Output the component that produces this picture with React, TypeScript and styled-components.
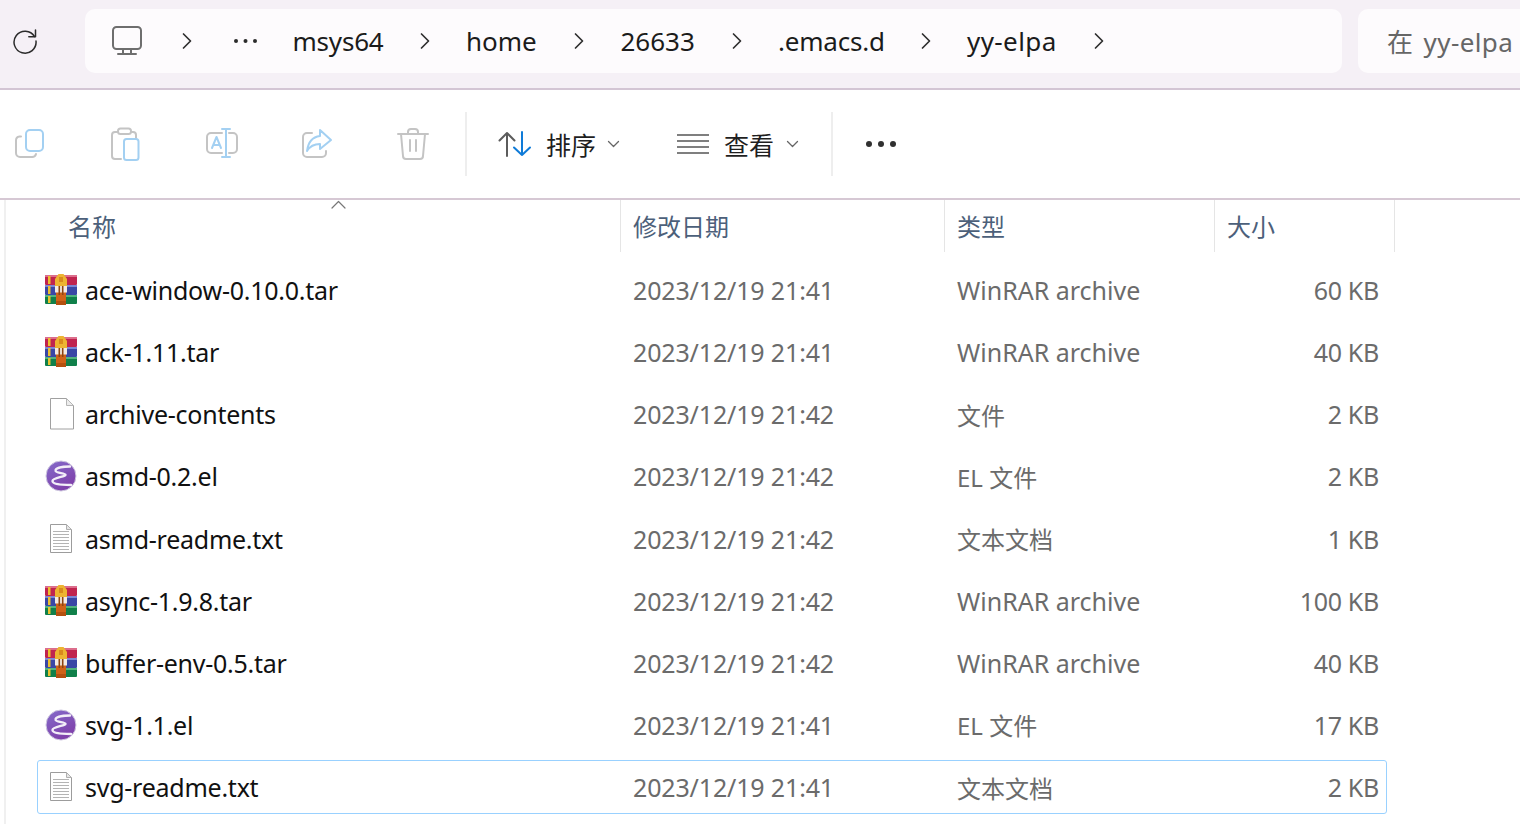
import React from "react";
import styled, { createGlobalStyle } from "styled-components";

const FONT = `"Noto Sans", "Noto Sans CJK SC", sans-serif`;

const Global = createGlobalStyle`
  html, body { margin: 0; padding: 0; background: #fff; overflow: hidden; }
  body { font-family: ${FONT}; width: 1520px; height: 824px; }
`;

const Page = styled.div`
  width: 1520px;
  height: 824px;
  overflow: hidden;
  display: flex;
  flex-direction: column;
`;

const TopBar = styled.div`
  height: 79px;
  flex: none;
  display: flex;
  align-items: flex-start;
  padding-top: 9px;
  background: #f5f0f6;
  border-bottom: 2px solid #d3c5d4;
`;

const RefreshSlot = styled.div`
  width: 85px;
  height: 64px;
  flex: none;
  display: flex;
  align-items: center;
  padding-left: 12px;
  box-sizing: border-box;
`;

const AddressBar = styled.div`
  width: 1257px;
  height: 64px;
  flex: none;
  background: #fdfbfd;
  border-radius: 10px;
  display: flex;
  align-items: center;
  padding-left: 27px;
  box-sizing: border-box;
`;

const Crumb = styled.span<{ $w: number; $ls: number }>`
  font-size: 26px;
  color: #1b1b1b;
  width: ${(p) => p.$w}px;
  letter-spacing: ${(p) => p.$ls}px;
  margin-left: 36.5px;
  flex: none;
  white-space: nowrap;
`;

const Chevron = styled.svg<{ $gap: number }>`
  width: 10px;
  height: 18px;
  flex: none;
  margin-left: ${(p) => p.$gap}px;
`;

const Ellipsis = styled.svg`
  width: 25px;
  height: 6px;
  flex: none;
  margin-left: 41px;
  margin-right: -2px;
`;

const SearchBox = styled.div`
  margin-left: 16px;
  flex: 1;
  height: 64px;
  background: #fdfbfd;
  border-radius: 10px 0 0 10px;
  font-size: 26px;
  color: #666;
  display: flex;
  align-items: center;
  padding-left: 29px;
  white-space: pre;
  overflow: hidden;
  letter-spacing: 0.4px;
  word-spacing: 3px;
`;

const Toolbar = styled.div`
  height: 108px;
  flex: none;
  background: #fff;
  border-bottom: 2px solid #d6c8d4;
  display: flex;
  align-items: center;
`;

const ToolIcon = styled.svg`
  width: 34px;
  height: 34px;
  flex: none;
`;

const ToolGroup = styled.div`
  display: flex;
  align-items: center;
  gap: 61.8px;
  padding-left: 13px;
  width: 465px;
  box-sizing: border-box;
`;

const Divider = styled.div<{ $left?: number }>`
  width: 2px;
  height: 64px;
  background: #eeeeee;
  flex: none;
  margin-left: ${(p) => p.$left ?? 0}px;
`;

const ToolButton = styled.div<{ $left: number; $gap: number }>`
  display: flex;
  align-items: center;
  gap: ${(p) => p.$gap}px;
  margin-left: ${(p) => p.$left}px;
  font-size: 25px;
  color: #1f1f1f;
`;

const SmallCaret = styled.svg`
  width: 13px;
  height: 8px;
  margin-left: -3px;
  flex: none;
`;

const MoreDots = styled.svg`
  width: 32px;
  height: 8px;
  margin-left: 32px;
  flex: none;
`;

const List = styled.div`
  flex: 1;
  position: relative;
  border-left: 2px solid #f0f0f0;
  margin-left: 4px;
`;

const HeaderRow = styled.div`
  display: grid;
  grid-template-columns: 621px 324px 270px 180px;
  height: 52px;
  margin-left: -6px;
`;

const HeaderCell = styled.div<{ $first?: boolean }>`
  font-size: 24px;
  color: #4c607a;
  padding-left: ${(p) => (p.$first ? 68 : 12)}px;
  padding-top: 2px;
  box-sizing: border-box;
  border-right: ${(p) => (p.$first ? "none" : "1px solid #e5e5e5")};
  border-left: ${(p) => (p.$first ? "none" : "1px solid #e5e5e5")};
  margin-left: ${(p) => (p.$first ? 0 : -1)}px;
  display: flex;
  align-items: center;
  line-height: 1;
`;

const SortCaret = styled.svg`
  position: absolute;
  left: 325px;
  top: 0;
  width: 15px;
  height: 9px;
`;

const Rows = styled.div`
  margin: 7px 0 0 31px;
  width: 1350px;
  display: flex;
  flex-direction: column;
`;

const Row = styled.div<{ $selected?: boolean }>`
  height: 62.125px;
  box-sizing: border-box;
  display: grid;
  grid-template-columns: 596px 324px 290px 1fr;
  align-items: center;
  position: relative;
  font-size: 25px;
  ${(p) =>
    p.$selected &&
    `&::before {
      content: "";
      position: absolute;
      left: 0; right: 0; top: 4px; bottom: 4px;
      border: 1px solid #99d1ff;
      border-radius: 3px;
    }`}
`;

const NameCell = styled.div`
  display: flex;
  align-items: center;
  padding-left: 8px;
  color: #111;
  min-width: 0;
  letter-spacing: -0.25px;
`;

const IconSlot = styled.div`
  width: 40px;
  height: 32px;
  flex: none;
  display: flex;
  align-items: center;
`;

const FileIcon = styled.svg`
  width: 32px;
  height: 32px;
  display: block;
`;

const Muted = styled.div`
  color: #6b6b6b;
  white-space: nowrap;
`;

const DateCell = styled(Muted)`
  letter-spacing: -0.15px;
`;

const TypeCell = styled(Muted)<{ $cjk: boolean }>`
  font-size: ${(p) => (p.$cjk ? 24 : 25)}px;
`;

const SizeCell = styled(Muted)`
  text-align: right;
  padding-right: 8px;
  letter-spacing: -0.3px;
`;

const Stroke = { fill: "none", strokeLinecap: "round", strokeLinejoin: "round" } as const;
const GRAY = "#c4c4c4";
const BLUE = "#a3d0f2";

function Rar() {
  return (
    <FileIcon viewBox="0 0 32 32">
      <rect x="0" y="1" width="32" height="10" rx="1" fill="#c0244f" />
      <rect x="0" y="1" width="32" height="2" fill="#dc6e8c" />
      <rect x="0" y="11" width="32" height="10" rx="1" fill="#3a47a6" />
      <rect x="0" y="11" width="32" height="2" fill="#7c86d4" />
      <rect x="0" y="21" width="32" height="9" rx="1" fill="#10804a" />
      <rect x="0" y="21" width="32" height="2" fill="#52b37e" />
      <rect x="3" y="2" width="2.5" height="8" fill="#ecc02e" />
      <rect x="3" y="12" width="2.5" height="8" fill="#ecc02e" />
      <rect x="3" y="22" width="2.5" height="7" fill="#ecc02e" />
      <path d="M13.5 0H18.5L22 5V12H10V5Z" fill="#edb431" />
      <rect x="14" y="3" width="4" height="5" fill="#d98a1c" />
      <rect x="11" y="12" width="10" height="19" fill="#cf6218" />
      <rect x="10" y="12" width="12" height="6.5" fill="#f4ebe2" />
      <rect x="13.5" y="12" width="1.6" height="9" fill="#8d4412" />
      <rect x="16.9" y="12" width="1.6" height="9" fill="#8d4412" />
      <rect x="11" y="27" width="10" height="4" fill="#b4500f" />
    </FileIcon>
  );
}

function Blank() {
  return (
    <FileIcon viewBox="0 0 32 32">
      <path d="M5.5 0.5H21.5L28.5 7.5V31H5.5Z" fill="#fff" stroke="#a0a0a0" strokeWidth="1" />
      <path d="M21.5 0.5V7.5H28.5Z" fill="#ececec" stroke="#b5b5b5" strokeWidth="1" />
    </FileIcon>
  );
}

function Emacs() {
  const id = React.useId();
  return (
    <FileIcon viewBox="0 0 32 32">
      <defs>
        <linearGradient id={id} x1="0.2" y1="0" x2="0.8" y2="1">
          <stop offset="0" stopColor="#8468c8" />
          <stop offset="1" stopColor="#7e3ba6" />
        </linearGradient>
      </defs>
      <circle cx="16" cy="16" r="15" fill={`url(#${id})`} stroke="#cfc8e0" strokeWidth="1" />
      <path
        d="M25 6.5C19 6.5 11 7.5 10.5 10.5C10 13 20 13 20.5 14.8C21 16.6 7.5 17.5 7.5 21C7.5 24.3 18 25 26 25"
        {...Stroke}
        stroke="#f3eef8"
        strokeWidth="2.4"
      />
    </FileIcon>
  );
}

function Txt() {
  return (
    <FileIcon viewBox="0 0 32 32">
      <path d="M5.5 1.5H21.5L26.5 6.5V29.5H5.5Z" fill="#fff" stroke="#9c9c9c" strokeWidth="1" />
      <path d="M21.5 1.5V6.5H26.5Z" fill="#e6e6e6" stroke="#b0b0b0" strokeWidth="1" />
      {[8, 11, 14, 17, 20, 23, 26].map((y) => (
        <line key={y} x1="8" x2="24" y1={y + 0.5} y2={y + 0.5} stroke="#b4b4b4" strokeWidth="1" />
      ))}
    </FileIcon>
  );
}

const ICONS = { rar: Rar, blank: Blank, emacs: Emacs, txt: Txt };

const FILES: { name: string; date: string; type: string; size: string; icon: keyof typeof ICONS; selected?: boolean }[] = [
  { name: "ace-window-0.10.0.tar", date: "2023/12/19 21:41", type: "WinRAR archive", size: "60 KB", icon: "rar" },
  { name: "ack-1.11.tar", date: "2023/12/19 21:41", type: "WinRAR archive", size: "40 KB", icon: "rar" },
  { name: "archive-contents", date: "2023/12/19 21:42", type: "文件", size: "2 KB", icon: "blank" },
  { name: "asmd-0.2.el", date: "2023/12/19 21:42", type: "EL 文件", size: "2 KB", icon: "emacs" },
  { name: "asmd-readme.txt", date: "2023/12/19 21:42", type: "文本文档", size: "1 KB", icon: "txt" },
  { name: "async-1.9.8.tar", date: "2023/12/19 21:42", type: "WinRAR archive", size: "100 KB", icon: "rar" },
  { name: "buffer-env-0.5.tar", date: "2023/12/19 21:42", type: "WinRAR archive", size: "40 KB", icon: "rar" },
  { name: "svg-1.1.el", date: "2023/12/19 21:41", type: "EL 文件", size: "17 KB", icon: "emacs" },
  { name: "svg-readme.txt", date: "2023/12/19 21:41", type: "文本文档", size: "2 KB", icon: "txt", selected: true },
];

const CRUMBS: [string, number, number][] = [
  ["msys64", 91, -0.2],
  ["home", 72, 0],
  ["26633", 75, 0],
  [".emacs.d", 106.5, -0.2],
  ["yy-elpa", 91, 0.4],
];

function Chev({ gap }: { gap: number }) {
  return (
    <Chevron $gap={gap} viewBox="0 0 10 18">
      <path d="M1.5 2L8.5 9L1.5 16" {...Stroke} stroke="#303030" strokeWidth="1.7" />
    </Chevron>
  );
}

function Caret() {
  return (
    <SmallCaret viewBox="0 0 13 8">
      <path d="M1.5 1.5L6.5 6.5L11.5 1.5" {...Stroke} stroke="#666" strokeWidth="1.3" />
    </SmallCaret>
  );
}

export default function App() {
  return (
    <Page>
      <Global />
      <TopBar>
        <RefreshSlot>
          <svg width="26" height="26" viewBox="0 0 26 26">
            <path d="M22.5 8.5A11 11 0 1 0 24 13" {...Stroke} stroke="#2b2b2b" strokeWidth="1.5" />
            <path d="M23.5 2V8.7H16.8" {...Stroke} stroke="#2b2b2b" strokeWidth="1.5" />
          </svg>
        </RefreshSlot>
        <AddressBar>
          <svg width="30" height="30" viewBox="0 0 30 30" style={{ flex: "none" }}>
            <rect x="1" y="1" width="28" height="22" rx="3.5" {...Stroke} stroke="#6e6e6e" strokeWidth="2" />
            <path d="M11 24V27M19 24V27M6 28H24" {...Stroke} stroke="#6e6e6e" strokeWidth="2" />
          </svg>
          <Chev gap={40} />
          <Ellipsis viewBox="0 0 25 6">
            <circle cx="3" cy="3" r="2" fill="#2b2b2b" />
            <circle cx="12.5" cy="3" r="2" fill="#2b2b2b" />
            <circle cx="22" cy="3" r="2" fill="#2b2b2b" />
          </Ellipsis>
          {CRUMBS.map(([c, w, ls]) => (
            <React.Fragment key={c}>
              <Crumb $w={w} $ls={ls}>{c}</Crumb>
              <Chev gap={36} />
            </React.Fragment>
          ))}
        </AddressBar>
        <SearchBox>在 yy-elpa</SearchBox>
      </TopBar>

      <Toolbar>
        <ToolGroup>
          <ToolIcon viewBox="0 0 34 34">
            <path d="M8 9.5H6.5A4 4 0 0 0 3 13.5V26A4 4 0 0 0 7 30H19A4 4 0 0 0 23 27" {...Stroke} stroke={GRAY} strokeWidth="2" />
            <rect x="13" y="3" width="17" height="21" rx="4" {...Stroke} stroke={BLUE} strokeWidth="2" />
          </ToolIcon>
          <ToolIcon viewBox="0 0 34 34">
            <path d="M9 5H6A3 3 0 0 0 3 8V29A3 3 0 0 0 6 32H12M22 5H24A3 3 0 0 1 27 8V11" {...Stroke} stroke={GRAY} strokeWidth="2" />
            <rect x="9" y="1.5" width="13" height="5.5" rx="2.5" {...Stroke} stroke={GRAY} strokeWidth="2" />
            <rect x="15" y="12" width="14.5" height="21" rx="2.5" {...Stroke} stroke={BLUE} strokeWidth="2" />
          </ToolIcon>
          <ToolIcon viewBox="0 0 34 34">
            <path d="M17 6H6A4 4 0 0 0 2 10V22A4 4 0 0 0 6 26H17M24 6H28A4 4 0 0 1 32 10V22A4 4 0 0 1 28 26H24" {...Stroke} stroke={GRAY} strokeWidth="2" />
            <path d="M21 2V30M17 2H25M17 30H25M7 21L11.5 10L16 21M8.5 18H14.5" {...Stroke} stroke={BLUE} strokeWidth="2" />
          </ToolIcon>
          <ToolIcon viewBox="0 0 34 34">
            <path d="M12 6H7A4 4 0 0 0 3 10V26A4 4 0 0 0 7 30H22A4 4 0 0 0 26 26V24" {...Stroke} stroke={GRAY} strokeWidth="2" />
            <path d="M20 3L31 13L20 22V17C14 17 10 19 7 24C8 16 12 10 20 9Z" {...Stroke} stroke={BLUE} strokeWidth="2" />
          </ToolIcon>
          <ToolIcon viewBox="0 0 34 34">
            <path d="M2 7H32M12 7V5A3 3 0 0 1 15 2H19A3 3 0 0 1 22 5V7M5 7L7 29A3 3 0 0 0 10 32H24A3 3 0 0 0 27 29L29 7M14 13V24M20 13V24" {...Stroke} stroke={GRAY} strokeWidth="2" />
          </ToolIcon>
        </ToolGroup>
        <Divider />
        <ToolButton $left={31} $gap={14}>
          <svg width="34" height="26" viewBox="0 0 34 26">
            <path d="M9 25V2M1.5 9.5L9 2L16.5 9.5" {...Stroke} stroke="#5c5c5c" strokeWidth="2" />
            <path d="M24 1V24M16 16.5L24 24L32 16.5" {...Stroke} stroke="#0f7bd8" strokeWidth="2" />
          </svg>
          排序
          <Caret />
        </ToolButton>
        <ToolButton $left={57} $gap={15}>
          <svg width="32" height="20" viewBox="0 0 32 20">
            <path d="M0 1H32M0 7H32M0 13H32M0 19H32" stroke="#555" strokeWidth="1.6" />
          </svg>
          查看
          <Caret />
        </ToolButton>
        <Divider $left={32} />
        <MoreDots viewBox="0 0 32 8">
          <circle cx="4" cy="4" r="3" fill="#303030" />
          <circle cx="16" cy="4" r="3" fill="#303030" />
          <circle cx="28" cy="4" r="3" fill="#303030" />
        </MoreDots>
      </Toolbar>

      <List>
        <SortCaret viewBox="0 0 15 9">
          <path d="M1 8L7.5 1.5L14 8" {...Stroke} stroke="#777" strokeWidth="1.2" />
        </SortCaret>
        <HeaderRow>
          <HeaderCell $first>名称</HeaderCell>
          <HeaderCell>修改日期</HeaderCell>
          <HeaderCell>类型</HeaderCell>
          <HeaderCell>大小</HeaderCell>
        </HeaderRow>
        <Rows>
          {FILES.map((f) => {
            const Icon = ICONS[f.icon];
            return (
              <Row key={f.name} $selected={f.selected}>
                <NameCell>
                  <IconSlot>
                    <Icon />
                  </IconSlot>
                  {f.name}
                </NameCell>
                <DateCell>{f.date}</DateCell>
                <TypeCell $cjk={/[\u4e00-\u9fff]/.test(f.type)}>{f.type}</TypeCell>
                <SizeCell>{f.size}</SizeCell>
              </Row>
            );
          })}
        </Rows>
      </List>
    </Page>
  );
}
